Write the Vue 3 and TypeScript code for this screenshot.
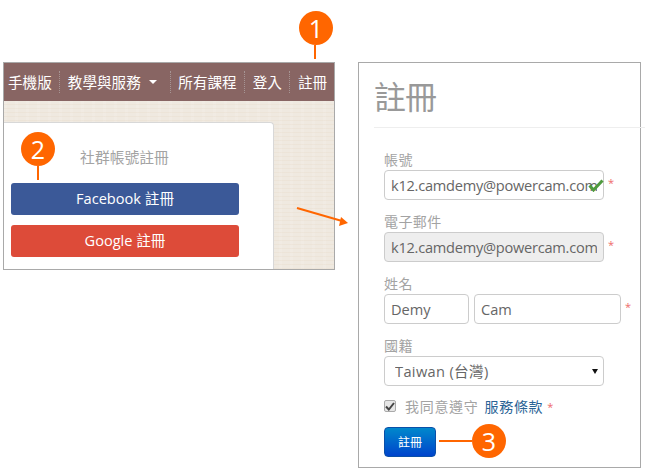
<script setup lang="ts">
const navItems = ['所有課程', '登入', '註冊']
const email = 'k12.camdemy@powercam.com'
</script>

<template>
  <div class="page">
    <section class="site">
      <nav class="nav">
        <a class="nav-item">手機版</a>
        <a class="nav-item nav-drop">教學與服務<i class="caret"></i></a>
        <a v-for="item in navItems" :key="item" class="nav-item">{{ item }}</a>
      </nav>
      <div class="paper">
        <div class="card">
          <p class="social-title">社群帳號註冊</p>
          <button class="social fb">Facebook 註冊</button>
          <button class="social google">Google 註冊</button>
        </div>
      </div>
    </section>

    <section class="form-panel">
      <h1 class="title">註冊</h1>
      <div class="rule"></div>
      <form class="form">
        <div class="field">
          <label>帳號</label>
          <div class="row">
            <div class="check-wrap">
              <input class="control wide" :value="email" />
              <svg class="ok" width="16" height="13" viewBox="0 0 16 13">
                <path d="M1.5 6.5 5.5 11 14.5 1.5" fill="none" stroke="#4f9a3f" stroke-width="3" />
              </svg>
            </div>
            <span class="req">*</span>
          </div>
        </div>
        <div class="field">
          <label>電子郵件</label>
          <div class="row">
            <input class="control wide locked" :value="email" disabled />
            <span class="req">*</span>
          </div>
        </div>
        <div class="field">
          <label>姓名</label>
          <div class="row">
            <input class="control first" value="Demy" />
            <input class="control last" value="Cam" />
            <span class="req">*</span>
          </div>
        </div>
        <div class="field">
          <label>國籍</label>
          <div class="select-wrap">
            <select class="control wide select">
              <option>Taiwan (台灣)</option>
            </select>
            <i class="select-arrow"></i>
          </div>
        </div>
        <div class="agree">
          <span class="box">
            <svg width="10" height="9" viewBox="0 0 10 9">
              <path d="M1 4.5 3.8 7.5 9 1" fill="none" stroke="#444" stroke-width="2" />
            </svg>
          </span>
          <span>我同意遵守</span>
          <a class="terms">服務條款</a>
          <span class="req small">*</span>
        </div>
        <button type="button" class="submit">註冊</button>
      </form>
    </section>

    <!-- annotations on top of the screenshots -->
    <div class="callout c1">1</div>
    <div class="stem s1"></div>
    <div class="callout c2">2</div>
    <div class="stem s2"></div>
    <div class="callout c3">3</div>
    <div class="stem s3"></div>
    <svg class="arrow" width="60" height="24" viewBox="0 0 60 24">
      <path d="M1 2 46 15" stroke="#ff6600" stroke-width="2" fill="none" />
      <path d="M52 17 43 20 45 11Z" fill="#ff6600" />
    </svg>
  </div>
</template>

<style>
html, body { margin: 0; background: #fff; }
</style>

<style scoped>
.page {
  position: relative;
  width: 645px;
  height: 471px;
  overflow: hidden;
  display: flex;
  align-items: flex-start;
  gap: 23px;
  padding: 62px 0 0 3px;
  box-sizing: border-box;
  background: #fff;
  font-family: "Open Sans", "Noto Sans CJK TC", sans-serif;
}
.site {
  width: 332px;
  height: 208px;
  flex: none;
  box-sizing: border-box;
  border: 1px solid #a9a9a9;
  display: flex;
  flex-direction: column;
}
.nav {
  height: 38px;
  flex: none;
  background: #886563;
  display: flex;
  align-items: center;
}
.nav-item {
  color: #fff;
  font-size: 14.6px;
  line-height: 20px;
  padding: 0 7.5px;
  border-left: 1px dotted #a69594;
  white-space: nowrap;
  height: 22px;
  display: flex;
  align-items: center;
}
.nav-item:first-child { border-left: 0; padding-left: 4px; }
.nav-drop { padding-right: 13px; }
.caret {
  margin-left: 8px;
  width: 0;
  height: 0;
  border-left: 4px solid transparent;
  border-right: 4px solid transparent;
  border-top: 4px solid #fff;
}
.paper {
  flex: 1;
  padding-top: 21px;
  background-color: #efe9e0;
  background-image:
    repeating-linear-gradient(0deg, rgba(226, 208, 184, .2) 0 1px, transparent 1px 4px),
    repeating-linear-gradient(90deg, rgba(255, 255, 255, .1) 0 3px, transparent 3px 11px);
}
.card {
  width: 270px;
  height: 147px;
  box-sizing: border-box;
  background: #fff;
  border: 1px solid #d8d8d8;
  border-width: 1px 1px 0 0;
  border-top-right-radius: 4px;
  padding: 25px 35px 0 7px;
  display: flex;
  flex-direction: column;
}
.social-title {
  margin: 0 0 17px;
  text-align: center;
  color: #a3a3a3;
  font-size: 14.8px;
  line-height: 18px;
}
.social {
  height: 32px;
  width: 228px;
  flex: none;
  border: 0;
  border-radius: 3px;
  color: #fff;
  font-family: inherit;
  font-size: 14.6px;
  line-height: 30px;
  padding: 0 0 2px;
  margin-bottom: 10px;
}
.fb { background: #3b5998; }
.google { background: #dd4b39; }

.form-panel {
  position: relative;
  width: 283px;
  height: 406px;
  flex: none;
  box-sizing: border-box;
  border: 1px solid #a9a9a9;
  padding: 14px 0 0 25px;
}
.title {
  margin: 0 0 0 -10px;
  font-weight: 400;
  font-size: 32px;
  line-height: 40px;
  letter-spacing: -1px;
  color: #999;
}
.rule {
  position: absolute;
  left: 15px;
  top: 64px;
  width: 275px;
  height: 1px;
  background: #eee;
}
.form {
  margin-top: 33px;
  display: flex;
  flex-direction: column;
}
.field { margin-bottom: 12px; }
.field label {
  display: block;
  color: #a3a3a3;
  font-size: 14px;
  line-height: 20px;
  letter-spacing: .4px;
}
.row { display: flex; align-items: center; }
.control {
  display: block;
  height: 30px;
  box-sizing: border-box;
  border: 1px solid #ccc;
  border-radius: 4px;
  background: #fff;
  padding: 0 6px;
  margin: 0;
  color: #666;
  font-family: inherit;
  font-size: 14.6px;
  outline: 0;
}
.wide { width: 220px; letter-spacing: -.25px; }
.locked { background: #eee; color: #666; opacity: 1; }
.first { width: 85px; margin-right: 5px; }
.last { width: 147px; }
.check-wrap { position: relative; }
.ok { position: absolute; right: 0; top: 9px; }
.req {
  margin-left: 4px;
  padding-bottom: 5px;
  color: #ee6a6a;
  font-size: 11px;
}
.select-wrap { position: relative; width: 220px; }
.select {
  appearance: none;
  padding-left: 10px;
  letter-spacing: .35px;
}
.select-arrow {
  position: absolute;
  right: 6px;
  top: 13px;
  width: 0;
  height: 0;
  border-left: 3px solid transparent;
  border-right: 3px solid transparent;
  border-top: 5px solid #111;
}
.agree {
  display: flex;
  align-items: center;
  height: 20px;
  margin-top: -2px;
  color: #a3a3a3;
  font-size: 14px;
  letter-spacing: .7px;
}
.box {
  width: 12px;
  height: 12px;
  box-sizing: border-box;
  border: 1px solid #aaa;
  border-radius: 2px;
  background: #e6e6e6;
  margin-right: 9px;
  display: flex;
  align-items: center;
  justify-content: center;
}
.terms { color: #2a6496; margin-left: 6px; }
.small { margin-left: 4px; letter-spacing: 0; padding-bottom: 0; }
.submit {
  margin-top: 11px;
  width: 52px;
  height: 30px;
  border: 1px solid #0a4fa8;
  border-radius: 4px;
  padding: 0;
  background: linear-gradient(#0088cc, #0044cc);
  color: #fff;
  font-family: inherit;
  font-size: 12px;
}

.callout {
  position: absolute;
  width: 34px;
  height: 34px;
  border-radius: 50%;
  background: #ff6600;
  color: #fff;
  font-family: "Open Sans", sans-serif;
  font-size: 25px;
  line-height: 34px;
  text-align: center;
}
.stem { position: absolute; background: #ff6600; }
.c1 { left: 299px; top: 11px; }
.s1 { left: 314px; top: 45px; width: 2px; height: 14px; }
.c2 { left: 21px; top: 132px; }
.s2 { left: 37px; top: 166px; width: 2px; height: 14px; }
.c3 { left: 472px; top: 424px; }
.s3 { left: 439px; top: 440px; width: 33px; height: 2px; }
.arrow { position: absolute; left: 296px; top: 206px; }
</style>
